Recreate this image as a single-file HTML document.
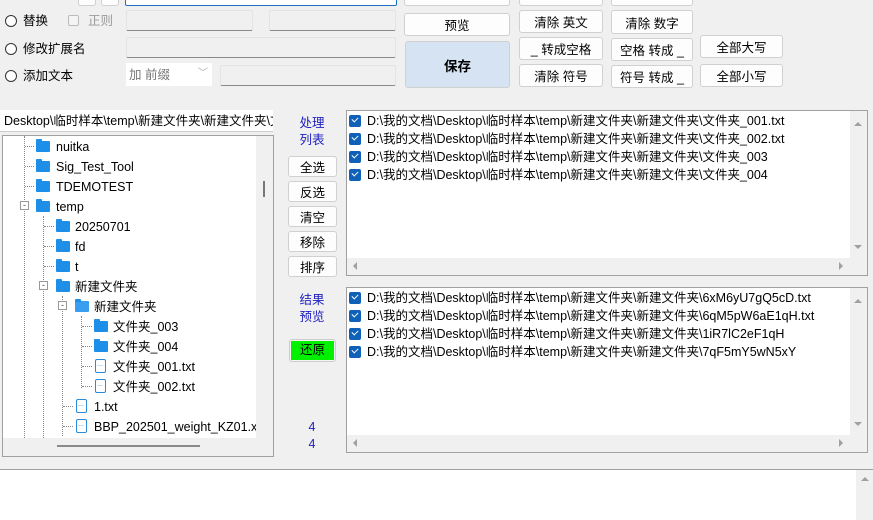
<!DOCTYPE html>
<html><head><meta charset="utf-8"><style>
*{box-sizing:border-box;margin:0;padding:0}
body{width:873px;height:520px;background:#f0f0f0;font-family:"Liberation Sans","Microsoft YaHei","Noto Sans CJK SC",sans-serif;font-size:12.5px;color:#000;position:relative;overflow:hidden}
.a{position:absolute}
.btn{position:absolute;background:#fdfdfd;border:1px solid #d0d0d0;border-radius:3px;text-align:center;font-size:12.5px;display:flex;align-items:center;justify-content:center;white-space:nowrap}
.in{position:absolute;background:#f0f0f0;border:1px solid #e3e3e3;border-bottom:1px solid #8a8a8a;border-radius:2px}
.radio{position:absolute;width:12px;height:12px;border:1px solid #333;border-radius:50%;background:#fff}
.lbl{position:absolute;white-space:nowrap;line-height:16px}
.fold{position:absolute;width:14px;height:11px;background:#1e8fe8;border-radius:1px}
.fold:before{content:"";position:absolute;left:0;top:-2px;width:6px;height:3px;background:#1e8fe8;border-radius:1px 1px 0 0}
.file{position:absolute;width:11px;height:14px;border:1.3px solid #2a8ad8;border-radius:2px;background:#fff}
.file:after{content:"...";position:absolute;left:1px;top:1px;font-size:7px;color:#2a8ad8;line-height:8px}
.tt{position:absolute;white-space:nowrap;font-size:12.5px;line-height:16px;margin-top:1px}
.vl{position:absolute;border-left:1px dotted #888;width:0}
.hl{position:absolute;border-top:1px dotted #888;height:0}
.list{position:absolute;background:#fff;border:1px solid #a0a0a0}
.row{position:absolute;left:2px;white-space:nowrap;line-height:16px;font-size:12.5px}
.cb{display:inline-block;width:12px;height:12px;background:#0f61b8;border-radius:2px;vertical-align:-2px;margin-right:6px;position:relative}
.cb:after{content:"";position:absolute;left:3px;top:2px;width:5px;height:3px;border-left:1.5px solid #fff;border-bottom:1.5px solid #fff;transform:rotate(-45deg)}
.blue{position:absolute;color:#2020c0;font-size:12.5px;line-height:17px;text-align:center}
.tri{position:absolute;width:0;height:0}
</style></head><body>

<div class="btn" style="left:78px;top:-10px;width:18px;height:16px"></div>
<div class="btn" style="left:101px;top:-10px;width:18px;height:16px"></div>
<div class="a" style="left:125px;top:-10px;width:272px;height:16px;background:#fff;border:1px solid #1f6fc2;border-radius:2px"></div>
<div class="btn" style="left:404px;top:-14px;width:106px;height:20px"></div>
<div class="btn" style="left:519px;top:-14px;width:84px;height:20px"></div>
<div class="btn" style="left:611px;top:-14px;width:82px;height:20px"></div>

<div class="radio" style="left:5px;top:15px"></div><div class="lbl" style="left:23px;top:13px">替换</div>
<div class="a" style="left:68px;top:15px;width:11px;height:11px;border:1px solid #bbb;border-radius:2px;background:#f4f4f4"></div>
<div class="lbl" style="left:88px;top:13px;color:#9a9a9a">正则</div>
<div class="in" style="left:126px;top:10px;width:127px;height:21px"></div>
<div class="in" style="left:269px;top:10px;width:127px;height:21px"></div>

<div class="radio" style="left:5px;top:43px"></div><div class="lbl" style="left:23px;top:41px">修改扩展名</div>
<div class="in" style="left:126px;top:37px;width:270px;height:21px"></div>

<div class="radio" style="left:5px;top:70px"></div><div class="lbl" style="left:23px;top:68px">添加文本</div>
<div class="a" style="left:126px;top:63px;width:86px;height:23px;background:#fff"></div>
<div class="lbl" style="left:129px;top:67px;color:#777">加 前缀</div>
<div class="lbl" style="left:198px;top:66px;color:#aaa;font-size:10px">﹀</div>
<div class="in" style="left:220px;top:65px;width:176px;height:21px"></div>

<div class="btn" style="left:404px;top:13px;width:106px;height:23px">预览</div>
<div class="btn" style="left:405px;top:41px;width:105px;height:47px;background:#d5e3f2;font-weight:bold;font-size:13.5px">保存</div>
<div class="btn" style="left:519px;top:10px;width:84px;height:23px">清除 英文</div>
<div class="btn" style="left:519px;top:37px;width:84px;height:23px">_ 转成空格</div>
<div class="btn" style="left:519px;top:64px;width:84px;height:23px">清除 符号</div>
<div class="btn" style="left:611px;top:10px;width:82px;height:24px">清除 数字</div>
<div class="btn" style="left:611px;top:38px;width:82px;height:23px">空格 转成 _</div>
<div class="btn" style="left:611px;top:65px;width:82px;height:23px">符号 转成 _</div>
<div class="btn" style="left:700px;top:35px;width:83px;height:23px">全部大写</div>
<div class="btn" style="left:700px;top:64px;width:83px;height:23px">全部小写</div>

<div class="a" style="left:0;top:110px;width:273px;height:22px;background:#fff;border-bottom:1px solid #ccc;overflow:hidden;white-space:nowrap;padding:4px 0 0 4px;line-height:14px">Desktop\临时样本\temp\新建文件夹\新建文件夹\文件夹_001.txt</div>

<div class="a" style="left:2px;top:135px;width:272px;height:322px;border:1px solid #a0a0a0;background:#f0f0f0"></div>
<div class="a" style="left:3px;top:136px;width:253px;height:302px;background:#fff;overflow:hidden">
 <div class="vl" style="left:21px;top:0;height:302px"></div>
 <div class="vl" style="left:40px;top:80px;height:222px"></div>
 <div class="vl" style="left:59px;top:160px;height:140px"></div>
 <div class="vl" style="left:78px;top:180px;height:72px"></div>
</div>
<div class="a" style="left:263px;top:181px;width:2px;height:16px;background:#777"></div>
<div class="a" style="left:57px;top:445px;width:143px;height:2px;background:#8a8a8a"></div>

<div class="hl" style="left:25px;top:146px;width:9px"></div><div class="fold" style="left:36px;top:141px"></div><div class="tt" style="left:56px;top:138px">nuitka</div>
<div class="hl" style="left:25px;top:166px;width:9px"></div><div class="fold" style="left:36px;top:161px"></div><div class="tt" style="left:56px;top:158px">Sig_Test_Tool</div>
<div class="hl" style="left:25px;top:186px;width:9px"></div><div class="fold" style="left:36px;top:181px"></div><div class="tt" style="left:56px;top:178px">TDEMOTEST</div>
<div class="a" style="left:20px;top:201px;width:9px;height:9px;border:1px solid #999;background:#fff;font-size:9px;line-height:6px;text-align:center;color:#444">-</div>
<div class="fold" style="left:36px;top:201px"></div><div class="tt" style="left:56px;top:198px">temp</div>
<div class="hl" style="left:44px;top:226px;width:10px"></div><div class="fold" style="left:56px;top:221px"></div><div class="tt" style="left:75px;top:218px">20250701</div>
<div class="hl" style="left:44px;top:246px;width:10px"></div><div class="fold" style="left:56px;top:241px"></div><div class="tt" style="left:75px;top:238px">fd</div>
<div class="hl" style="left:44px;top:266px;width:10px"></div><div class="fold" style="left:56px;top:261px"></div><div class="tt" style="left:75px;top:258px">t</div>
<div class="a" style="left:39px;top:281px;width:9px;height:9px;border:1px solid #999;background:#fff;font-size:9px;line-height:6px;text-align:center;color:#444">-</div>
<div class="fold" style="left:56px;top:281px"></div><div class="tt" style="left:75px;top:278px">新建文件夹</div>
<div class="a" style="left:58px;top:301px;width:9px;height:9px;border:1px solid #999;background:#fff;font-size:9px;line-height:6px;text-align:center;color:#444">-</div>
<div class="fold" style="left:75px;top:301px;background:#3a9ef0"></div><div class="tt" style="left:94px;top:298px">新建文件夹</div>
<div class="hl" style="left:82px;top:326px;width:10px"></div><div class="fold" style="left:94px;top:321px"></div><div class="tt" style="left:113px;top:318px">文件夹_003</div>
<div class="hl" style="left:82px;top:346px;width:10px"></div><div class="fold" style="left:94px;top:341px"></div><div class="tt" style="left:113px;top:338px">文件夹_004</div>
<div class="hl" style="left:82px;top:366px;width:10px"></div><div class="file" style="left:95px;top:359px"></div><div class="tt" style="left:113px;top:358px">文件夹_001.txt</div>
<div class="hl" style="left:82px;top:386px;width:10px"></div><div class="file" style="left:95px;top:379px"></div><div class="tt" style="left:113px;top:378px">文件夹_002.txt</div>
<div class="hl" style="left:63px;top:406px;width:10px"></div><div class="file" style="left:76px;top:399px"></div><div class="tt" style="left:94px;top:398px">1.txt</div>
<div class="hl" style="left:63px;top:426px;width:10px"></div><div class="file" style="left:76px;top:419px"></div><div class="a" style="left:94px;top:419px;width:162px;overflow:hidden;white-space:nowrap;line-height:16px">BBP_202501_weight_KZ01.xlsx</div>

<div class="blue" style="left:296px;top:115px;width:32px">处理<br>列表</div>
<div class="btn" style="left:288px;top:156px;width:49px;height:21px">全选</div>
<div class="btn" style="left:288px;top:181px;width:49px;height:21px">反选</div>
<div class="btn" style="left:288px;top:206px;width:49px;height:21px">清空</div>
<div class="btn" style="left:288px;top:231px;width:49px;height:21px">移除</div>
<div class="btn" style="left:288px;top:256px;width:49px;height:21px">排序</div>
<div class="blue" style="left:296px;top:292px;width:32px">结果<br>预览</div>
<div class="a" style="left:289px;top:339px;width:47px;height:23px;border:1px solid #ccc;border-radius:3px;background:#f4f4f4"></div>
<div class="a" style="left:291px;top:341px;width:43px;height:19px;background:#00f000;text-align:center;line-height:19px">还原</div>
<div class="blue" style="left:305px;top:419px;width:14px">4</div>
<div class="blue" style="left:305px;top:436px;width:14px">4</div>

<div class="list" style="left:346px;top:110px;width:522px;height:166px">
 <div class="row" style="top:2px"><span class="cb"></span>D:\我的文档\Desktop\临时样本\temp\新建文件夹\新建文件夹\文件夹_001.txt</div>
 <div class="row" style="top:20px"><span class="cb"></span>D:\我的文档\Desktop\临时样本\temp\新建文件夹\新建文件夹\文件夹_002.txt</div>
 <div class="row" style="top:38px"><span class="cb"></span>D:\我的文档\Desktop\临时样本\temp\新建文件夹\新建文件夹\文件夹_003</div>
 <div class="row" style="top:56px"><span class="cb"></span>D:\我的文档\Desktop\临时样本\temp\新建文件夹\新建文件夹\文件夹_004</div>
 <div class="a" style="right:0;top:0;width:17px;height:147px;background:#f0f0f0"></div>
 <div class="a" style="left:0;bottom:0;width:520px;height:17px;background:#f0f0f0"></div>
 <div class="tri" style="right:5px;top:11px;border:4px solid transparent;border-bottom:4px solid #a0a0a0;border-top:0"></div>
 <div class="tri" style="right:5px;top:134px;border:4px solid transparent;border-top:4px solid #a0a0a0;border-bottom:0"></div>
 <div class="tri" style="left:6px;bottom:5px;border:4px solid transparent;border-right:4px solid #a0a0a0;border-left:0"></div>
 <div class="tri" style="right:24px;bottom:5px;border:4px solid transparent;border-left:4px solid #a0a0a0;border-right:0"></div>
</div>

<div class="list" style="left:346px;top:287px;width:522px;height:166px">
 <div class="row" style="top:2px"><span class="cb"></span>D:\我的文档\Desktop\临时样本\temp\新建文件夹\新建文件夹\6xM6yU7gQ5cD.txt</div>
 <div class="row" style="top:20px"><span class="cb"></span>D:\我的文档\Desktop\临时样本\temp\新建文件夹\新建文件夹\6qM5pW6aE1qH.txt</div>
 <div class="row" style="top:38px"><span class="cb"></span>D:\我的文档\Desktop\临时样本\temp\新建文件夹\新建文件夹\1iR7lC2eF1qH</div>
 <div class="row" style="top:56px"><span class="cb"></span>D:\我的文档\Desktop\临时样本\temp\新建文件夹\新建文件夹\7qF5mY5wN5xY</div>
 <div class="a" style="right:0;top:0;width:17px;height:147px;background:#f0f0f0"></div>
 <div class="a" style="left:0;bottom:0;width:520px;height:17px;background:#f0f0f0"></div>
 <div class="tri" style="right:5px;top:11px;border:4px solid transparent;border-bottom:4px solid #a0a0a0;border-top:0"></div>
 <div class="tri" style="right:5px;top:134px;border:4px solid transparent;border-top:4px solid #a0a0a0;border-bottom:0"></div>
 <div class="tri" style="left:6px;bottom:5px;border:4px solid transparent;border-right:4px solid #a0a0a0;border-left:0"></div>
 <div class="tri" style="right:24px;bottom:5px;border:4px solid transparent;border-left:4px solid #a0a0a0;border-right:0"></div>
</div>

<div class="a" style="left:0;top:469px;width:873px;height:51px;background:#fff;border-top:1px solid #a0a0a0"></div>
<div class="a" style="left:856px;top:470px;width:17px;height:50px;background:#f0f0f0"></div>
<div class="tri" style="left:861px;top:477px;border:4px solid transparent;border-bottom:4px solid #a0a0a0;border-top:0"></div>
</body></html>
